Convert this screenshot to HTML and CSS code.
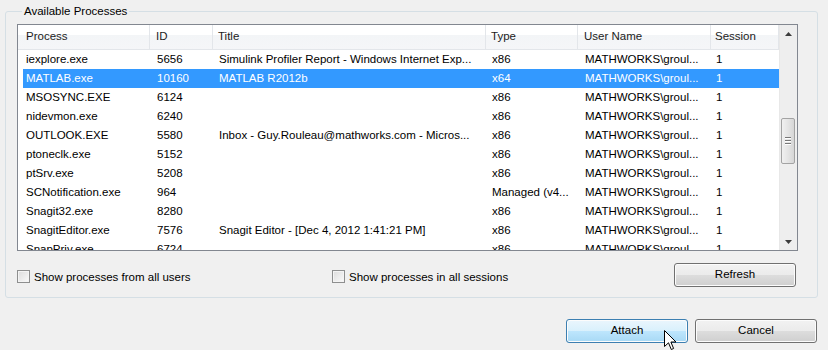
FILE: index.html
```html
<!DOCTYPE html>
<html>
<head>
<meta charset="utf-8">
<link rel="stylesheet" href="styles.css">
</head>
<body>
<fieldset class="group">
  <legend class="group-title">Available Processes</legend>
  <div class="list">
    <div class="list-main">
      <div class="list-header">
        <div class="hcell c1">Process</div>
        <div class="hcell c2">ID</div>
        <div class="hcell c3">Title</div>
        <div class="hcell c4">Type</div>
        <div class="hcell c5">User Name</div>
        <div class="hcell c6">Session</div>
      </div>
      <div class="rows">
        <div class="row"><span class="c1">iexplore.exe</span><span class="c2">5656</span><span class="c3">Simulink Profiler Report - Windows Internet Exp...</span><span class="c4">x86</span><span class="c5">MATHWORKS\groul...</span><span class="c6">1</span></div>
        <div class="row selected"><span class="c1">MATLAB.exe</span><span class="c2">10160</span><span class="c3">MATLAB R2012b</span><span class="c4">x64</span><span class="c5">MATHWORKS\groul...</span><span class="c6">1</span></div>
        <div class="row"><span class="c1">MSOSYNC.EXE</span><span class="c2">6124</span><span class="c3"></span><span class="c4">x86</span><span class="c5">MATHWORKS\groul...</span><span class="c6">1</span></div>
        <div class="row"><span class="c1">nidevmon.exe</span><span class="c2">6240</span><span class="c3"></span><span class="c4">x86</span><span class="c5">MATHWORKS\groul...</span><span class="c6">1</span></div>
        <div class="row"><span class="c1">OUTLOOK.EXE</span><span class="c2">5580</span><span class="c3">Inbox - Guy.Rouleau@mathworks.com - Micros...</span><span class="c4">x86</span><span class="c5">MATHWORKS\groul...</span><span class="c6">1</span></div>
        <div class="row"><span class="c1">ptoneclk.exe</span><span class="c2">5152</span><span class="c3"></span><span class="c4">x86</span><span class="c5">MATHWORKS\groul...</span><span class="c6">1</span></div>
        <div class="row"><span class="c1">ptSrv.exe</span><span class="c2">5208</span><span class="c3"></span><span class="c4">x86</span><span class="c5">MATHWORKS\groul...</span><span class="c6">1</span></div>
        <div class="row"><span class="c1">SCNotification.exe</span><span class="c2">964</span><span class="c3"></span><span class="c4">Managed (v4...</span><span class="c5">MATHWORKS\groul...</span><span class="c6">1</span></div>
        <div class="row"><span class="c1">Snagit32.exe</span><span class="c2">8280</span><span class="c3"></span><span class="c4">x86</span><span class="c5">MATHWORKS\groul...</span><span class="c6">1</span></div>
        <div class="row"><span class="c1">SnagitEditor.exe</span><span class="c2">7576</span><span class="c3">Snagit Editor - [Dec 4, 2012 1:41:21 PM]</span><span class="c4">x86</span><span class="c5">MATHWORKS\groul...</span><span class="c6">1</span></div>
        <div class="row"><span class="c1">SnapPriv.exe</span><span class="c2">6724</span><span class="c3"></span><span class="c4">x86</span><span class="c5">MATHWORKS\groul...</span><span class="c6">1</span></div>
      </div>
    </div>
    <div class="scrollbar">
      <div class="sb-btn"><svg width="7" height="4" viewBox="0 0 7 4"><path d="M0 4 L3.5 0 L7 4 Z" fill="#3c3c3c"/></svg></div>
      <div class="sb-track">
        <div class="sb-thumb"><span class="grip"></span><span class="grip"></span><span class="grip"></span></div>
      </div>
      <div class="sb-btn"><svg width="7" height="4" viewBox="0 0 7 4"><path d="M0 0 L7 0 L3.5 4 Z" fill="#3c3c3c"/></svg></div>
    </div>
  </div>
  <div class="options">
    <label class="check opt1"><span class="box"></span>Show processes from all users</label>
    <label class="check opt2"><span class="box"></span>Show processes in all sessions</label>
    <button class="btn refresh">Refresh</button>
  </div>
</fieldset>
<div class="footer">
  <button class="btn hover">Attach</button>
  <button class="btn">Cancel</button>
  <svg class="cursor" width="13" height="21" viewBox="0 0 13 21"><path d="M0.5 0.5 L0.5 16.5 L4.5 12.8 L7.3 19.5 L9.6 18.5 L6.9 12 L12 12 Z" fill="#fff" stroke="#000" stroke-width="1" stroke-linejoin="miter"/></svg>
</div>
</body>
</html>
```
FILE: styles.css
```css
html, body {
  margin: 0;
  padding: 0;
  background: #f0f0f0;
}
body {
  padding: 3px 10px 0 5px;
  font-family: "Liberation Sans", Arial, sans-serif;
  font-size: 11.5px;
  color: #000;
  position: relative;
  height: 347px;
  overflow: hidden;
}
.group {
  margin: 0;
  padding: 5px 19px 10px 11px;
  border: 1px solid #d5dfe5;
  border-radius: 3px;
  min-width: 0;
}
.group-title {
  margin-left: 5px;
  padding: 0 2px;
  line-height: 16px;
  height: 16px;
}
.list {
  display: flex;
  height: 225px;
  border: 1px solid #828790;
  background: #fff;
  overflow: hidden;
}
.list-main {
  width: 761px;
  overflow: hidden;
}
.list-header {
  display: grid;
  grid-template-columns: 132px 63px 273px 92px 133px 68px;
  height: 24px;
  border-bottom: 1px solid #e3e6ea;
  background: linear-gradient(#ffffff 0, #ffffff 40%, #f3f5f7 40%, #f5f6f8 100%);
}
.hcell {
  line-height: 23px;
  border-right: 1px solid #e3e6ea;
  color: #1c1c1c;
  white-space: nowrap;
  overflow: hidden;
}
.hcell.c1 { padding-left: 8px; }
.hcell.c2 { padding-left: 6px; }
.hcell.c3 { padding-left: 5px; }
.hcell.c4 { padding-left: 5px; }
.hcell.c5 { padding-left: 6px; }
.hcell.c6 { padding-left: 4px; }
.rows {
  padding-left: 5px;
}
.row {
  display: grid;
  grid-template-columns: 127px 63px 273px 92px 133px 68px;
  height: 19px;
  line-height: 19px;
  white-space: nowrap;
}
.row span {
  overflow: hidden;
}
.row .c1 { padding-left: 3px; }
.row .c2 { padding-left: 7px; }
.row .c3 { padding-left: 6px; }
.row .c4 { padding-left: 6px; }
.row .c5 { padding-left: 7px; }
.row .c6 { padding-left: 5px; }
.row.selected {
  background: #3399ff;
  color: #fff;
}
.scrollbar {
  width: 17px;
  display: flex;
  flex-direction: column;
  background: #eeeeee;
  border-left: 1px solid #e8e8e8;
}
.sb-btn {
  height: 17px;
  display: flex;
  align-items: center;
  justify-content: center;
  flex: none;
}
.sb-track {
  flex: 1;
  padding-top: 76px;
}
.sb-thumb {
  height: 46px;
  margin: 0 0 0 1px;
  width: 14px;
  border: 1px solid #a3a3a3;
  border-radius: 2px;
  background: linear-gradient(to right, #f0f0f0, #e4e4e4 50%, #d6d6d6);
  display: flex;
  flex-direction: column;
  justify-content: center;
  align-items: center;
  gap: 1px;
  box-sizing: border-box;
}
.grip {
  width: 6px;
  height: 1px;
  background: #777;
  border-bottom: 1px solid #fff;
}
.options {
  display: flex;
  align-items: center;
  margin-top: 12px;
  height: 24px;
}
.check {
  display: flex;
  align-items: center;
  gap: 3px;
  white-space: nowrap;
  padding-top: 3px;
}
.opt1 { width: 315px; }
.opt2 { flex: 1; padding-left: 0; }
.box {
  width: 11px;
  height: 11px;
  border: 1px solid #8e8f8f;
  background: linear-gradient(135deg, #dcdcdc, #f4f4f4 80%, #fff);
  box-shadow: inset 0 0 0 1px #f4f4f4;
  flex: none;
  margin-right: 1px;
}
.btn {
  font: inherit;
  color: #000;
  width: 122px;
  height: 24px;
  border: 1px solid #707070;
  border-radius: 3px;
  background: linear-gradient(#f2f2f2 0, #ebebeb 50%, #dddddd 50%, #cfcfcf 100%);
  box-shadow: inset 0 0 0 1px #fcfcfc;
  padding: 0 0 2px;
}
.refresh {
  margin-right: 2px;
}
.footer {
  display: flex;
  justify-content: flex-end;
  gap: 7px;
  margin-top: 21px;
  margin-right: 1px;
}
.btn.hover {
  border-color: #3c7fb1;
  background: linear-gradient(#eaf6fd 0, #d9f0fc 50%, #bee6fd 50%, #a7d9f5 100%);
}
.cursor {
  position: absolute;
  left: 664px;
  top: 330px;
}
```
